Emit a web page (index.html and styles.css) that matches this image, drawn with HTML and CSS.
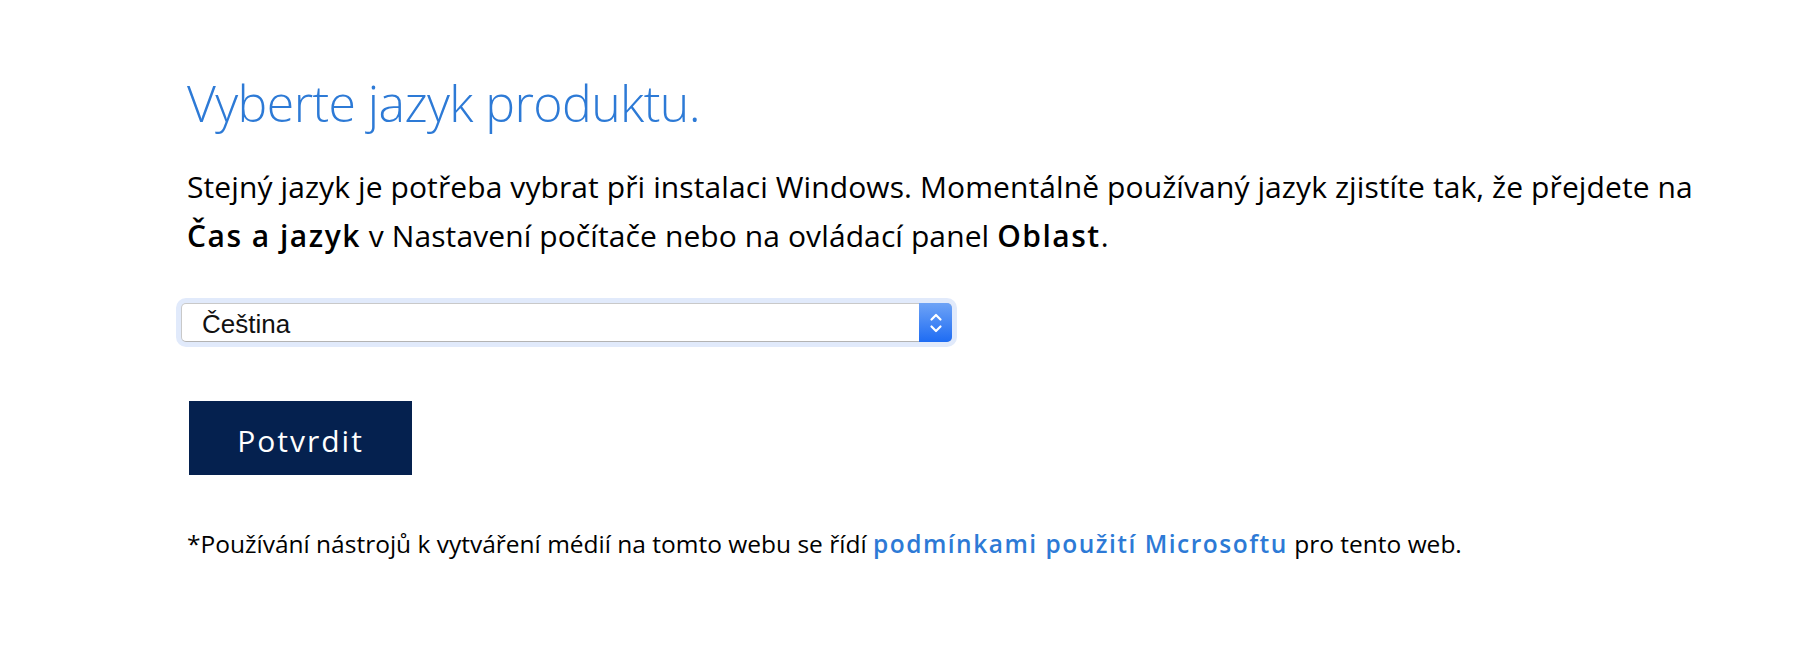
FILE: index.html
```html
<!DOCTYPE html>
<html lang="cs">
<head>
<meta charset="utf-8">
<title>Vyberte jazyk produktu</title>
<link rel="stylesheet" href="styles.css">
</head>
<body>
<main class="page">
  <h1 class="title">Vyberte jazyk produktu.</h1>
  <p class="intro">Stejný jazyk je potřeba vybrat při instalaci Windows. Momentálně používaný jazyk zjistíte tak, že přejdete na <strong>Čas a jazyk</strong> v Nastavení počítače nebo na ovládací panel <strong>Oblast</strong>.</p>
  <div class="select-box">
    <select class="select" aria-label="Jazyk">
      <option selected>Čeština</option>
    </select>
    <span class="stepper" aria-hidden="true">
      <svg width="14" height="24" viewBox="0 0 14 24">
        <path d="M2.5 8.5 L7 4 L11.5 8.5" fill="none" stroke="#fff" stroke-width="2.2" stroke-linecap="round" stroke-linejoin="round"/>
        <path d="M2.5 15.5 L7 20 L11.5 15.5" fill="none" stroke="#fff" stroke-width="2.2" stroke-linecap="round" stroke-linejoin="round"/>
      </svg>
    </span>
  </div>
  <button class="confirm" type="button">Potvrdit</button>
  <p class="note">*Používání nástrojů k vytváření médií na tomto webu se řídí <a class="link" href="#">podmínkami použití Microsoftu</a> pro tento web.</p>
</main>
</body>
</html>
```

FILE: styles.css
```css
html, body {
  margin: 0;
  padding: 0;
  background: #fff;
}

body {
  font-family: "Open Sans", "Noto Sans", sans-serif;
  color: #000;
}

.page {
  display: flex;
  flex-direction: column;
  align-items: flex-start;
  padding: 73px 0 0 187px;
  width: 1580px;
}

.title {
  margin: 0;
  font-size: 50px;
  line-height: 60px;
  font-weight: 300;
  color: #2d7ad6;
  letter-spacing: -0.6px;
}

.intro {
  margin: 29px 0 0 0;
  max-width: 1545px;
  font-size: 30px;
  line-height: 49px;
  font-weight: 400;
  letter-spacing: 0.1px;
  color: #000;
}

.intro strong {
  font-weight: 600;
  letter-spacing: 1.5px;
}

.select-box {
  margin: 43px 0 0 -6px;
  width: 771px;
  height: 39px;
  box-sizing: border-box;
  display: flex;
  align-items: stretch;
  background: #fff;
  border: 1px solid #c9c9c9;
  border-bottom-color: #b3b3b3;
  border-radius: 5px;
  box-shadow: 0 0 0 5px #e1eafb;
}

.select {
  flex: 1;
  appearance: none;
  -webkit-appearance: none;
  border: 0;
  background: transparent;
  padding: 2px 0 0 20px;
  margin: 0;
  font-family: "Liberation Sans", Arial, sans-serif;
  font-size: 26px;
  color: #111;
  outline: none;
}

.stepper {
  width: 33px;
  margin: -1px -1px -1px 0;
  display: flex;
  align-items: center;
  justify-content: center;
  border-radius: 0 5px 5px 0;
  background: linear-gradient(#6ea3f6, #1e6cf3);
}

.confirm {
  margin: 59px 0 0 2px;
  width: 223px;
  height: 74px;
  border: 0;
  background: #05214f;
  color: #fff;
  font-family: "Open Sans", "Noto Sans", sans-serif;
  font-size: 30px;
  font-weight: 400;
  letter-spacing: 2px;
  padding: 4px 0 0 0;
  cursor: pointer;
}

.note {
  margin: 54px 0 0 0;
  font-size: 24.5px;
  line-height: 30px;
  color: #000;
}

.link {
  color: #2d7ad6;
  font-weight: 600;
  letter-spacing: 1.5px;
  text-decoration: none;
}
```
